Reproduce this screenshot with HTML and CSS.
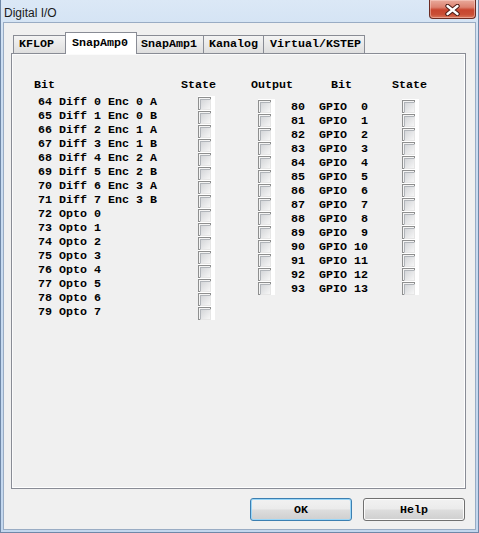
FILE: index.html
```html
<!DOCTYPE html>
<html>
<head>
<meta charset="utf-8">
<title>Digital I/O</title>
<link rel="stylesheet" href="styles.css">
</head>
<body>
<div class="window">
  <div class="titlebar">
    <span class="title">Digital I/O</span>
    <div class="close" aria-label="Close">
      <svg width="15" height="12" viewBox="0 0 15 12">
        <path d="M2.5 2 L12.5 10 M12.5 2 L2.5 10" stroke="#4a1a14" stroke-width="4.4" stroke-linecap="round" fill="none"/>
        <path d="M2.5 2 L12.5 10 M12.5 2 L2.5 10" stroke="#ffffff" stroke-width="2.4" stroke-linecap="round" fill="none"/>
      </svg>
    </div>
  </div>
  <div class="client">
    <div class="tabs">
      <div class="tab t-kflop">KFLOP</div>
      <div class="tab sel t-sa0">SnapAmp0</div>
      <div class="tab t-sa1">SnapAmp1</div>
      <div class="tab t-kan">Kanalog</div>
      <div class="tab t-virt">Virtual/KSTEP</div>
    </div>
    <div class="panel">
      <div class="left">
        <div class="hdr"><span class="h-bit">Bit</span><span>State</span></div>
        <div class="lbody">
          <div class="labels">
            <div>64 Diff 0 Enc 0 A</div>
            <div>65 Diff 1 Enc 0 B</div>
            <div>66 Diff 2 Enc 1 A</div>
            <div>67 Diff 3 Enc 1 B</div>
            <div>68 Diff 4 Enc 2 A</div>
            <div>69 Diff 5 Enc 2 B</div>
            <div>70 Diff 6 Enc 3 A</div>
            <div>71 Diff 7 Enc 3 B</div>
            <div>72 Opto 0</div>
            <div>73 Opto 1</div>
            <div>74 Opto 2</div>
            <div>75 Opto 3</div>
            <div>76 Opto 4</div>
            <div>77 Opto 5</div>
            <div>78 Opto 6</div>
            <div>79 Opto 7</div>
          </div>
          <div class="strip lstrip">
            <span class="cb"></span><span class="cb"></span><span class="cb"></span><span class="cb"></span>
            <span class="cb"></span><span class="cb"></span><span class="cb"></span><span class="cb"></span>
            <span class="cb"></span><span class="cb"></span><span class="cb"></span><span class="cb"></span>
            <span class="cb"></span><span class="cb"></span><span class="cb"></span><span class="cb"></span>
          </div>
        </div>
      </div>
      <div class="right">
        <div class="hdr"><span class="h-out">Output</span><span class="h-bit2">Bit</span><span>State</span></div>
        <div class="rbody">
          <div class="strip">
            <span class="cb"></span><span class="cb"></span><span class="cb"></span><span class="cb"></span>
            <span class="cb"></span><span class="cb"></span><span class="cb"></span><span class="cb"></span>
            <span class="cb"></span><span class="cb"></span><span class="cb"></span><span class="cb"></span>
            <span class="cb"></span><span class="cb"></span>
          </div>
          <div class="gpio">
            <div>80  GPIO  0</div>
            <div>81  GPIO  1</div>
            <div>82  GPIO  2</div>
            <div>83  GPIO  3</div>
            <div>84  GPIO  4</div>
            <div>85  GPIO  5</div>
            <div>86  GPIO  6</div>
            <div>87  GPIO  7</div>
            <div>88  GPIO  8</div>
            <div>89  GPIO  9</div>
            <div>90  GPIO 10</div>
            <div>91  GPIO 11</div>
            <div>92  GPIO 12</div>
            <div>93  GPIO 13</div>
          </div>
          <div class="strip">
            <span class="cb"></span><span class="cb"></span><span class="cb"></span><span class="cb"></span>
            <span class="cb"></span><span class="cb"></span><span class="cb"></span><span class="cb"></span>
            <span class="cb"></span><span class="cb"></span><span class="cb"></span><span class="cb"></span>
            <span class="cb"></span><span class="cb"></span>
          </div>
        </div>
      </div>
    </div>
    <div class="buttons">
      <button class="btn default">OK</button>
      <button class="btn">Help</button>
    </div>
  </div>
</div>
</body>
</html>
```
FILE: styles.css
```css
* { box-sizing: border-box; }
html, body { margin: 0; padding: 0; }
body {
  width: 479px;
  height: 533px;
  overflow: hidden;
  font-family: "Liberation Mono", "Courier New", monospace;
  color: #000;
}
.window {
  width: 479px;
  height: 533px;
  display: flex;
  flex-direction: column;
  background: linear-gradient(#dbe8f6, #cbddf1 60px, #c3d7ee);
  border: 1px solid #6f88a8;
  border-top: none;
}
.titlebar {
  height: 22px;
  flex: none;
  display: flex;
  justify-content: space-between;
  align-items: flex-start;
  padding-left: 3px;
  padding-right: 2px;
}
.title {
  font-family: "Liberation Sans", Arial, sans-serif;
  font-size: 12px;
  line-height: 18px;
  padding-top: 4px;
  color: #1a1a1a;
}
.close {
  width: 47px;
  height: 19px;
  border: 1px solid #6b2b22;
  border-top: none;
  border-radius: 0 0 4px 4px;
  background: linear-gradient(#e9aa9c, #dc8270 40%, #c8452f 55%, #c94e35 80%, #d9775c);
  box-shadow: inset 0 0 0 1px rgba(255, 220, 210, 0.45);
  display: flex;
  align-items: center;
  justify-content: center;
}
.close svg { display: block; margin-top: 1px; }
.client {
  flex: 1;
  min-height: 0;
  margin: 0 2px 2px 2px;
  border: 1px solid #99acc4;
  background: #f0f0f0;
  padding: 9px 9px 0 7px;
  display: flex;
  flex-direction: column;
}
.tabs {
  display: flex;
  flex: none;
  align-items: flex-end;
  height: 21px;
  padding-left: 2px;
}
.tab {
  height: 18px;
  border: 1px solid #898c95;
  border-bottom: none;
  background: linear-gradient(#f4f4f4, #e9e9e9 50%, #dedede);
  font-weight: bold;
  font-size: 11.67px;
  line-height: 17px;
  white-space: pre;
  margin-left: -1px;
}
.t-kflop { width: 54px; margin-left: 0; padding-left: 5px; }
.t-sa0 { width: 72px; padding-left: 6px; }
.t-sa1 { width: 70px; padding-left: 6px; }
.t-kan { width: 61px; padding-left: 5px; }
.t-virt { width: 102px; padding-left: 6px; }
.tab.sel {
  height: 22px;
  margin: 0 -2px -1px -2px;
  background: #ffffff;
  line-height: 20px;
  position: relative;
  z-index: 1;
}
.panel {
  height: 436px;
  flex: none;
  border: 1px solid #898c95;
  box-shadow: inset 1px 1px 0 #fbfbfb, inset -1px -1px 0 #ffffff;
  display: flex;
  align-items: flex-start;
  padding: 24px 0 0 22px;
  font-weight: bold;
  font-size: 11.67px;
  line-height: 14px;
}
.hdr {
  display: flex;
  height: 14px;
}
.hdr span { white-space: pre; }
.left {
  display: flex;
  flex-direction: column;
}
.h-bit { width: 147px; }
.lbody {
  display: flex;
  align-items: flex-start;
  margin-top: 3px;
}
.labels {
  margin-left: 4px;
  width: 160px;
}
.labels > div, .gpio > div {
  height: 14px;
  white-space: pre;
}
.strip {
  width: 17px;
  background: #ffffff;
  display: grid;
  grid-auto-rows: 14px;
}
.lstrip { margin-top: 1px; }
.cb {
  align-self: end;
  width: 13px;
  height: 13px;
  border: 1px solid #8e8f8f;
  background: #f4f4f4;
  padding: 1px;
}
.cb::after {
  content: "";
  display: block;
  width: 9px;
  height: 9px;
  border: 1px solid #b0b4b9;
  border-right-color: #e6e6e6;
  border-bottom-color: #e6e6e6;
  background: linear-gradient(135deg, #d4d6d9, #f6f6f6);
}
.right {
  display: flex;
  flex-direction: column;
  margin-left: 35px;
}
.h-out { width: 80px; }
.h-bit2 { width: 61px; }
.rbody {
  display: flex;
  align-items: flex-start;
  margin-top: 7px;
  padding-left: 7px;
}
.gpio {
  margin-left: 16px;
  margin-top: 1px;
  width: 111px;
}
.buttons {
  flex: none;
  margin-top: 9px;
  display: flex;
  justify-content: flex-end;
  gap: 11px;
  padding-right: 1px;
}
.btn {
  width: 102px;
  height: 23px;
  border: 1px solid #707070;
  border-radius: 3px;
  background: linear-gradient(#f2f2f2, #ebebeb 48%, #dddddd 52%, #cfcfcf);
  box-shadow: inset 0 0 0 1px #fbfbfb;
  font-family: "Liberation Mono", "Courier New", monospace;
  font-weight: bold;
  font-size: 11.67px;
  color: #000;
  padding: 0;
}
.btn.default {
  border-color: #3c7fb1;
  box-shadow: inset 0 0 0 1px #9ad6f7;
}
```
